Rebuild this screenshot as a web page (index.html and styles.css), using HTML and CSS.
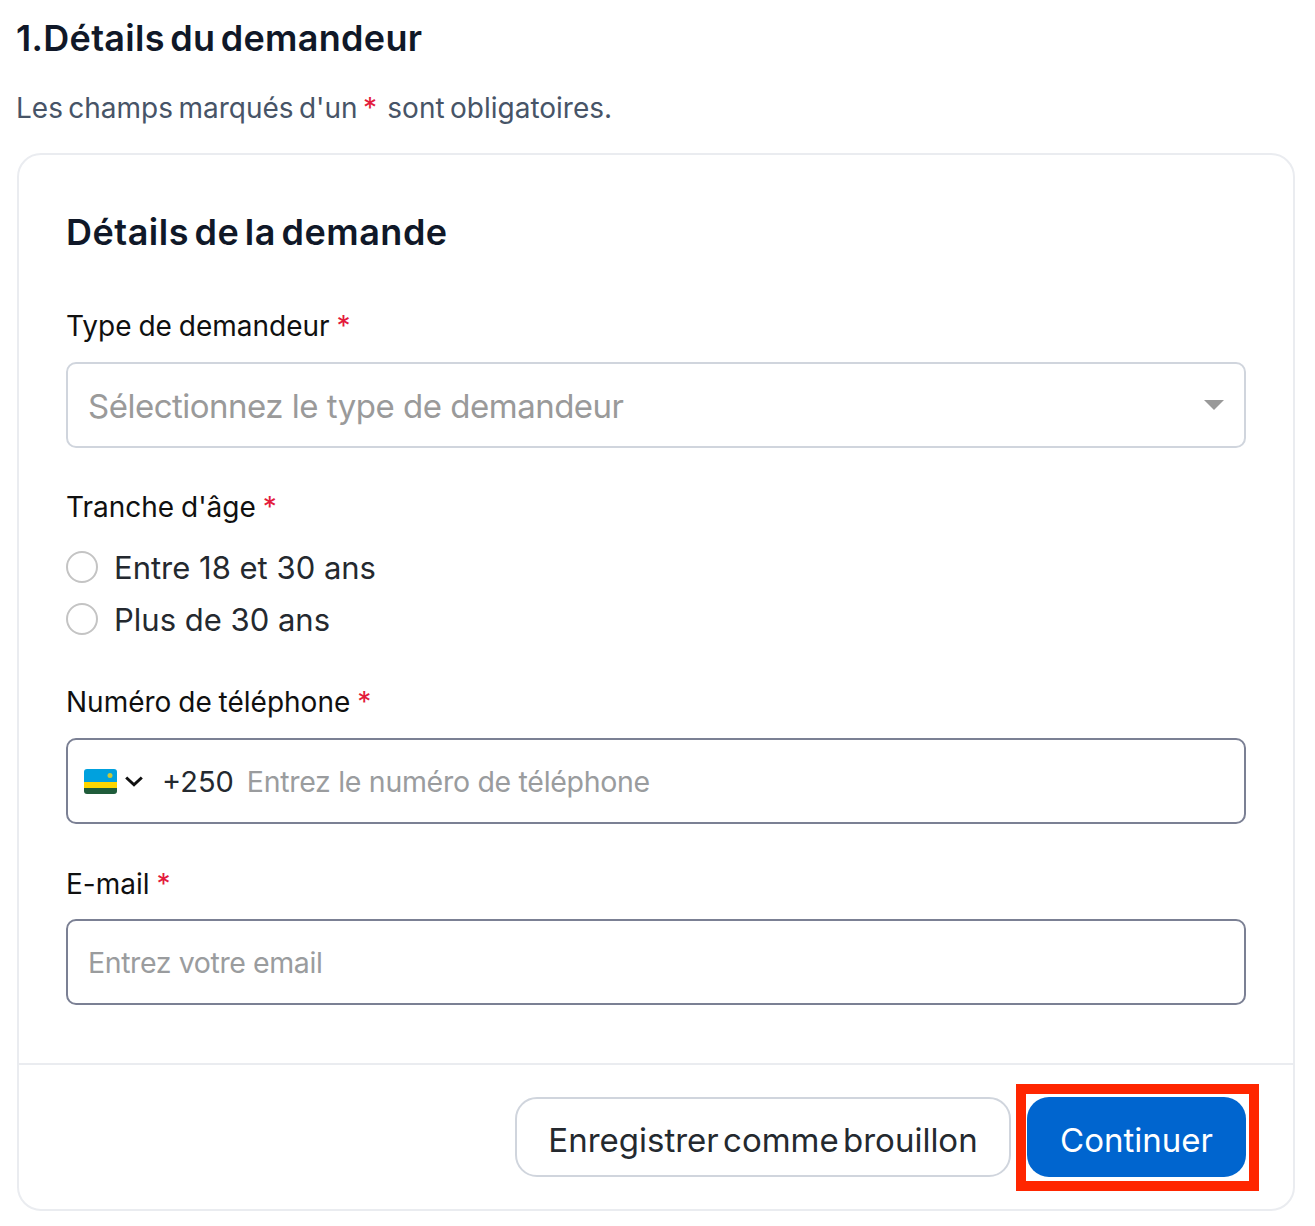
FILE: index.html
```html
<!DOCTYPE html>
<html lang="fr">
<head>
    <meta charset="UTF-8">
    <meta name="viewport" content="width=device-width, initial-scale=1.0">
    <title>Détails du demandeur</title>
    <link rel="stylesheet" href="styles.css">
</head>
<body>

<div class="page">
    <h1>1.Détails du demandeur</h1>
    <p class="hint">Les champs marqués d'un <span class="req">*</span> sont obligatoires.</p>

    <div class="card">
        <div class="card-body">
            <h2>Détails de la demande</h2>

            <div class="form-group group-type">
                <label>Type de demandeur <span class="req">*</span></label>
                <div class="field field-light">
                    <span class="select-text">Sélectionnez le type de demandeur</span>
                    <span class="caret"></span>
                </div>
            </div>

            <div class="form-group group-age">
                <label>Tranche d'âge <span class="req">*</span></label>
                <div class="radio-row"><span class="radio"></span>Entre 18 et 30 ans</div>
                <div class="radio-row"><span class="radio"></span>Plus de 30 ans</div>
            </div>

            <div class="form-group group-phone">
                <label>Numéro de téléphone <span class="req">*</span></label>
                <div class="field">
                    <svg class="flag" width="33" height="25" viewBox="0 0 33 25">
                        <defs><clipPath id="flag-clip"><rect width="33" height="25" rx="3"/></clipPath></defs>
                        <g clip-path="url(#flag-clip)">
                            <rect width="33" height="13" fill="#00a1de"/>
                            <rect y="13" width="33" height="6" fill="#fdd600"/>
                            <rect y="19" width="33" height="6" fill="#1f5c3a"/>
                            <circle cx="26" cy="6.5" r="2.5" fill="#c9c83a"/>
                        </g>
                    </svg>
                    <svg class="chevron" width="18" height="11" viewBox="0 0 18 11">
                        <path d="M1.2 1.5L9 8.8l7.8-7.3" fill="none" stroke="#111" stroke-width="3"/>
                    </svg>
                    <span class="dial">+250</span>
                    <span class="placeholder">Entrez le numéro de téléphone</span>
                </div>
            </div>

            <div class="form-group group-mail">
                <label>E-mail <span class="req">*</span></label>
                <div class="field">
                    <span class="placeholder">Entrez votre email</span>
                </div>
            </div>
        </div>

        <div class="card-footer">
            <button class="btn btn-draft">Enregistrer comme brouillon</button>
            <div class="btn-wrap">
                <button class="btn btn-primary">Continuer</button>
                <div class="highlight"></div>
            </div>
        </div>
    </div>
</div>

</body>
</html>
```
FILE: styles.css
```css
* {
    box-sizing: border-box;
}
body {
    font-family: Inter, "Liberation Sans", sans-serif;
    background-color: white;
    margin: 0;
}
.page {
    padding: 16px 20px 16px 16px;
}
h1 {
    margin: 0;
    font-size: 36px;
    line-height: 44px;
    font-weight: 600;
    letter-spacing: 0.3px;
    word-spacing: -4px;
    color: #101828;
}
.hint {
    margin: 30px 0 0;
    font-size: 28px;
    line-height: 36px;
    word-spacing: -2.5px;
    color: #475467;
}
.hint .req {
    margin: 0 5px 0 0;
}
.req {
    color: #e31b3c;
}
.card {
    margin: 27px 0 0 1px;
    height: 1058px;
    border: 2px solid #eaecf0;
    border-radius: 24px;
    background-color: white;
}
.card-body {
    height: 910px;
    padding: 55px 47px 0;
    border-bottom: 2px solid #eaecf0;
}
h2 {
    margin: 0;
    font-size: 36px;
    line-height: 44px;
    font-weight: 600;
    letter-spacing: 0.5px;
    word-spacing: -4px;
    color: #101828;
}
label {
    display: block;
    font-size: 28px;
    line-height: 36px;
    font-weight: 400;
    word-spacing: -1px;
    color: #101010;
}
.group-type {
    margin-top: 54px;
}
.group-age {
    margin-top: 41px;
}
.group-phone {
    margin-top: 39px;
}
.group-mail {
    margin-top: 42px;
}
.field {
    display: flex;
    align-items: center;
    height: 86px;
    margin-top: 18px;
    padding: 0 22px 0 16px;
    border: 2px solid #7b8094;
    border-radius: 10px;
}
.field-light {
    justify-content: space-between;
    padding-left: 20px;
    border-color: #d0d5dd;
}
.group-mail .field {
    margin-top: 17px;
    padding-left: 20px;
}
.select-text {
    padding-top: 2px;
    font-size: 33px;
    letter-spacing: -0.5px;
    color: #9a9a9a;
}
.caret {
    margin-right: -2px;
    border-left: 10px solid transparent;
    border-right: 10px solid transparent;
    border-top: 10px solid #999;
}
.radio-row {
    display: flex;
    align-items: center;
    height: 52px;
    font-size: 31px;
    color: #24292f;
}
.group-age label {
    margin-bottom: 16px;
}
.radio {
    width: 32px;
    height: 32px;
    margin-right: 16px;
    border: 2px solid #c4c4c4;
    border-radius: 50%;
}
.flag {
    flex-shrink: 0;
}
.chevron {
    flex-shrink: 0;
    margin-left: 8px;
}
.dial {
    margin-left: 19px;
    font-size: 29px;
    color: #24292f;
}
.placeholder {
    margin-left: 13px;
    font-size: 28.5px;
    letter-spacing: -0.3px;
    color: #9a9c9e;
}
.group-mail .placeholder {
    margin-left: 0;
    letter-spacing: -0.4px;
}
.card-footer {
    display: flex;
    justify-content: flex-end;
    gap: 16px;
    padding: 32px 47px 0 0;
}
.btn {
    height: 80px;
    padding-top: 6px;
    border-radius: 22px;
    font-family: inherit;
    font-size: 33px;
    word-spacing: -5px;
}
.btn-draft {
    width: 496px;
    background-color: white;
    border: 2px solid #d0d5dd;
    color: #24292f;
}
.btn-primary {
    width: 219px;
    background-color: #0065cf;
    border: none;
    color: white;
}
.btn-wrap {
    position: relative;
}
.highlight {
    position: absolute;
    top: -13px;
    left: -11px;
    right: -13px;
    bottom: -14px;
    border: 10px solid #ff2600;
}
```
